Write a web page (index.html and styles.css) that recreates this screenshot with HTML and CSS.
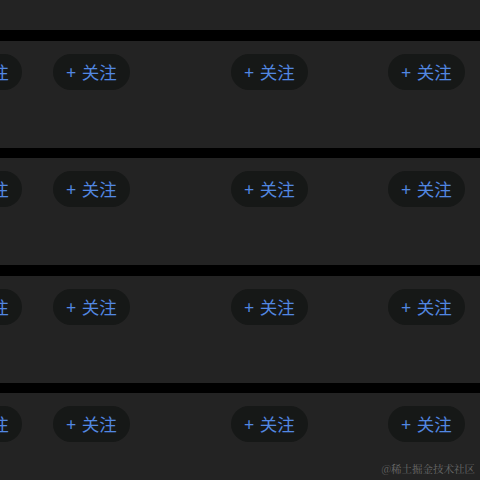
FILE: index.html
```html
<!DOCTYPE html>
<html lang="zh">
<head>
<meta charset="utf-8">
<link rel="stylesheet" href="styles.css">
</head>
<body>
<div class="page">
  <div class="top"></div>
  <div class="card">
    <div class="row">
      <button class="follow b1">+ 关注</button>
      <button class="follow b2">+ 关注</button>
      <button class="follow b3">+ 关注</button>
      <button class="follow b4">+ 关注</button>
    </div>
  </div>
  <div class="card">
    <div class="row">
      <button class="follow b1">+ 关注</button>
      <button class="follow b2">+ 关注</button>
      <button class="follow b3">+ 关注</button>
      <button class="follow b4">+ 关注</button>
    </div>
  </div>
  <div class="card">
    <div class="row">
      <button class="follow b1">+ 关注</button>
      <button class="follow b2">+ 关注</button>
      <button class="follow b3">+ 关注</button>
      <button class="follow b4">+ 关注</button>
    </div>
  </div>
  <div class="card">
    <div class="row">
      <button class="follow b1">+ 关注</button>
      <button class="follow b2">+ 关注</button>
      <button class="follow b3">+ 关注</button>
      <button class="follow b4">+ 关注</button>
    </div>
  </div>
  <div class="watermark">@稀土掘金技术社区</div>
</div>
</body>
</html>
```

FILE: styles.css
```css
* { box-sizing: border-box; }
html, body {
  margin: 0;
  padding: 0;
  width: 480px;
  height: 480px;
  overflow: hidden;
  background: #000;
}
.page {
  position: relative;
  width: 480px;
  height: 480px;
  display: flex;
  flex-direction: column;
  gap: 10.5px;
  font-family: "Noto Sans CJK SC", "Noto Sans", sans-serif;
}
.top {
  height: 30px;
  flex: none;
  background: #232323;
}
.card {
  height: 107px;
  flex: none;
  background: #232323;
  padding-top: 13px;
  overflow: hidden;
}
.row {
  display: flex;
  align-items: center;
}
.follow {
  flex: none;
  width: 77px;
  height: 36px;
  border: none;
  border-radius: 18px;
  background: #161817;
  color: #5287e2;
  font-family: "Noto Sans CJK SC", sans-serif;
  font-size: 17.5px;
  line-height: 36px;
  word-spacing: 2px;
  padding: 0;
  text-align: center;
  white-space: nowrap;
}
.b1 { margin-left: -55px; }
.b2 { margin-left: 31px; }
.b3 { margin-left: 101px; }
.b4 { margin-left: 80px; }
.watermark {
  position: absolute;
  right: 5px;
  bottom: 4px;
  font-family: "Noto Serif CJK SC", "Noto Sans CJK SC", serif;
  font-size: 10.5px;
  color: #6a6a6a;
}
```
